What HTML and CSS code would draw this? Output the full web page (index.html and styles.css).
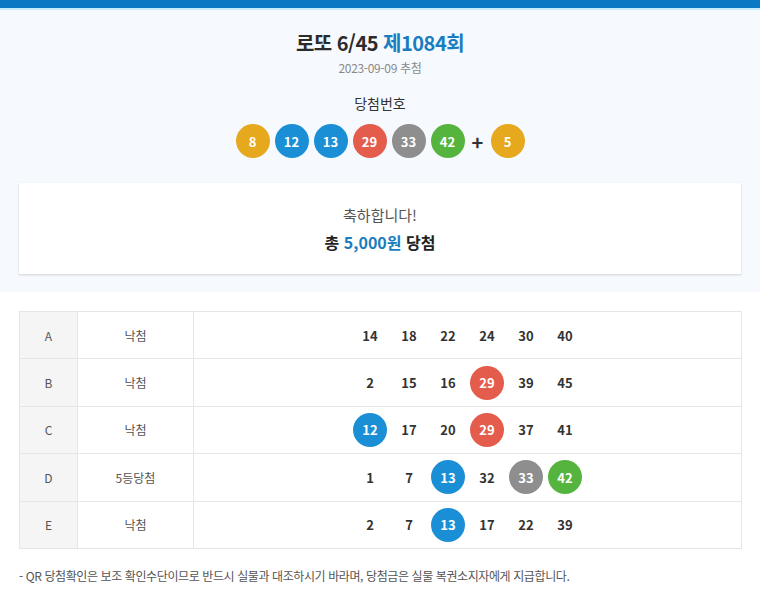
FILE: index.html
```html
<!DOCTYPE html>
<html lang="ko">

<head>
    <meta charset="UTF-8">
    <meta name="viewport" content="width=device-width, initial-scale=1.0">
    <link rel="stylesheet" href="styles.css">
</head>

<body>
    <div class="top-bar"></div>

    <!-- 당첨 결과 요약 -->
    <div class="summary">
        <h1 class="title">로또 6/45 <span class="accent">제1084회</span></h1>
        <div class="date">2023-09-09 추첨</div>

        <div class="win-label">당첨번호</div>
        <div class="win-balls">
            <span class="ball yellow">8</span>
            <span class="ball blue">12</span>
            <span class="ball blue">13</span>
            <span class="ball red">29</span>
            <span class="ball gray">33</span>
            <span class="ball green">42</span>
            <span class="plus">+</span>
            <span class="ball yellow">5</span>
        </div>

        <div class="result-card">
            <div class="congrats">축하합니다!</div>
            <div class="prize">총 <span class="accent">5,000원</span> 당첨</div>
        </div>
    </div>

    <!-- 게임별 결과 -->
    <div class="games">
        <table class="game-table">
            <tr>
                <td class="col-slot">A</td>
                <td class="col-rank">낙첨</td>
                <td class="col-nums">
                    <div class="nums">
                        <span class="num">14</span><span class="num">18</span><span class="num">22</span><span class="num">24</span><span class="num">30</span><span class="num">40</span>
                    </div>
                </td>
            </tr>
            <tr>
                <td class="col-slot">B</td>
                <td class="col-rank">낙첨</td>
                <td class="col-nums">
                    <div class="nums">
                        <span class="num">2</span><span class="num">15</span><span class="num">16</span><span class="num ball red">29</span><span class="num">39</span><span class="num">45</span>
                    </div>
                </td>
            </tr>
            <tr>
                <td class="col-slot">C</td>
                <td class="col-rank">낙첨</td>
                <td class="col-nums">
                    <div class="nums">
                        <span class="num ball blue">12</span><span class="num">17</span><span class="num">20</span><span class="num ball red">29</span><span class="num">37</span><span class="num">41</span>
                    </div>
                </td>
            </tr>
            <tr>
                <td class="col-slot">D</td>
                <td class="col-rank">5등당첨</td>
                <td class="col-nums">
                    <div class="nums">
                        <span class="num">1</span><span class="num">7</span><span class="num ball blue">13</span><span class="num">32</span><span class="num ball gray">33</span><span class="num ball green">42</span>
                    </div>
                </td>
            </tr>
            <tr>
                <td class="col-slot">E</td>
                <td class="col-rank">낙첨</td>
                <td class="col-nums">
                    <div class="nums">
                        <span class="num">2</span><span class="num">7</span><span class="num ball blue">13</span><span class="num">17</span><span class="num">22</span><span class="num">39</span>
                    </div>
                </td>
            </tr>
        </table>

        <p class="note">- QR 당첨확인은 보조 확인수단이므로 반드시 실물과 대조하시기 바라며, 당첨금은 실물 복권소지자에게 지급합니다.</p>
    </div>
</body>

</html>
```

FILE: styles.css
```css
/* 기본 */
body {
    margin: 0;
    padding: 0;
    font-family: "Noto Sans CJK KR", "Noto Sans", sans-serif;
    background-color: #ffffff;
    color: #333333;
}

.top-bar {
    height: 8px;
    background-color: #0a78c2;
    border-bottom: 2px solid #c4ecfb;
}

.accent {
    color: #1a7dc0;
}

/* 요약 영역 */
.summary {
    background-color: #f6f9fd;
    padding: 20px 19px 18px;
    text-align: center;
}

.title {
    margin: 0;
    font-size: 20px;
    font-weight: bold;
    line-height: 26px;
    letter-spacing: -0.5px;
    color: #2b2b2b;
}

.date {
    margin-top: 4px;
    font-size: 12px;
    line-height: 16px;
    color: #8a8a8a;
    letter-spacing: -0.3px;
}

.win-label {
    margin-top: 17px;
    font-size: 14px;
    line-height: 20px;
    color: #333333;
}

.win-balls {
    display: flex;
    justify-content: center;
    align-items: center;
    gap: 5px;
    margin-top: 11px;
}

.ball {
    display: inline-flex;
    align-items: center;
    justify-content: center;
    width: 34px;
    height: 34px;
    border-radius: 50%;
    color: #ffffff;
    font-size: 13px;
    font-weight: bold;
}

.yellow { background-color: #e6a81d; }
.blue { background-color: #1b8fd6; }
.red { background-color: #e45c4c; }
.gray { background-color: #8e8e8e; }
.green { background-color: #55b43e; }

.plus {
    width: 16px;
    font-size: 20px;
    font-weight: bold;
    color: #333333;
}

.result-card {
    margin-top: 25px;
    background-color: #ffffff;
    box-shadow: 0 1px 2px rgba(0, 0, 0, 0.16);
    padding: 21px 0 20px;
}

.congrats {
    font-size: 15px;
    line-height: 22px;
    color: #555555;
}

.prize {
    margin-top: 4px;
    font-size: 16px;
    font-weight: bold;
    line-height: 24px;
    color: #222222;
}

/* 게임 테이블 */
.games {
    padding: 19px 18px 0 19px;
}

.game-table {
    width: 100%;
    border-collapse: collapse;
    border: 1px solid #e2e2e2;
}

.game-table td {
    height: 46.4px;
    border: 1px solid #e6e6e6;
    padding: 0;
    text-align: center;
    font-size: 12px;
    color: #555555;
}

.col-slot {
    width: 57px;
    background-color: #f5f5f5;
}

.col-rank {
    width: 115px;
}

.nums {
    display: flex;
    justify-content: center;
    gap: 5px;
}

.num {
    display: inline-flex;
    align-items: center;
    justify-content: center;
    width: 34px;
    height: 34px;
    font-size: 13px;
    font-weight: bold;
    color: #333333;
}

.num.ball {
    color: #ffffff;
}

.note {
    margin: 18px 0 0;
    font-size: 12px;
    line-height: 18px;
    color: #555555;
    letter-spacing: -0.4px;
}
```
